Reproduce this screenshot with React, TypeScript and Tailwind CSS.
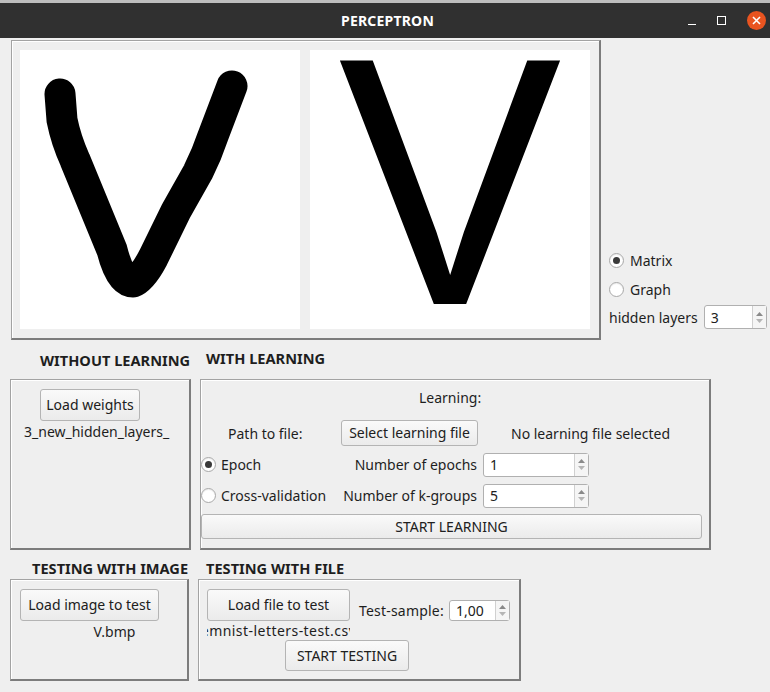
import React from 'react';

const font = { fontFamily: '"Noto Sans", "Open Sans", sans-serif' };

const frame =
  'border border-[#a3a3a3] border-r-2 border-b-2 border-r-[#7c7c7c] border-b-[#7c7c7c] shadow-[inset_1px_1px_0_#ffffff]';

const btn =
  'flex items-center justify-center rounded-[3px] border border-[#b4b4b4] bg-gradient-to-b from-[#fafafa] to-[#ebebeb] text-[14px] text-[#202020] leading-none';

function Radio({ checked }: { checked?: boolean }) {
  return (
    <span className="flex h-[15px] w-[15px] shrink-0 items-center justify-center rounded-full border border-[#a8a8a8] bg-white shadow-[inset_0_1px_1px_rgba(0,0,0,0.08)]">
      {checked && <span className="h-[7px] w-[7px] rounded-full bg-[#3a3a3a]" />}
    </span>
  );
}

function SpinBox({ value, width, height = 24 }: { value: string; width: string; height?: number }) {
  return (
    <div
      className={`flex ${width} items-stretch rounded-[3px] border border-[#b0b0b0] bg-white`}
      style={{ height }}
    >
      <div className="flex flex-1 items-center pl-[6px] text-[14px] text-[#202020]">{value}</div>
      <div className="flex w-[14px] flex-col items-center justify-center gap-[3px] border-l border-[#d0d0d0] bg-[#f5f5f5]">
        <svg width="7" height="4" viewBox="0 0 7 4">
          <path d="M0 4 L3.5 0 L7 4 Z" fill="#8a8a8a" />
        </svg>
        <svg width="7" height="4" viewBox="0 0 7 4">
          <path d="M0 0 L3.5 4 L7 0 Z" fill="#b5b5b5" />
        </svg>
      </div>
    </div>
  );
}

export default function App() {
  return (
    <div className="h-[692px] w-[770px] overflow-hidden bg-[#efefef] text-[#1e1e1e]" style={font}>
      {/* title bar */}
      <div className="h-[3px] bg-[#bdbdbd]" />
      <div className="flex h-[35px] items-center justify-between bg-[#303030] pr-[4px]">
        <span className="ml-[341px] text-[14px] font-bold tracking-[0.2px] text-white">PERCEPTRON</span>
        <div className="flex h-full items-center gap-[21px]">
          <span className="mt-[8px] h-[1.5px] w-[8px] bg-white" />
          <span className="h-[9px] w-[9px] border-[1.5px] border-white" />
          <span className="flex h-[19px] w-[19px] items-center justify-center rounded-full bg-[#e95420]">
            <svg width="9" height="9" viewBox="0 0 9 9">
              <path d="M1 1 L8 8 M8 1 L1 8" stroke="white" strokeWidth="1.6" />
            </svg>
          </span>
        </div>
      </div>

      {/* images + view options */}
      <div className="mt-[2px] flex">
        <div className={`ml-[11px] flex h-[300px] w-[590px] gap-[10px] pl-[8px] pt-[9px] ${frame}`}>
          <div className="h-[279px] w-[280px] bg-white">
            <svg width="280" height="279" viewBox="0 0 280 279">
              <path
                d="M40 44 L42 70 Q46 90 55 110 L92 200 Q100 232 113 232 Q122 229 133 208 L156 161 L178 122 Q187 104 193 86 L212 36"
                fill="none"
                stroke="black"
                strokeWidth="31"
                strokeLinecap="round"
                strokeLinejoin="round"
              />
            </svg>
          </div>
          <div className="h-[279px] w-[280px] bg-white">
            <svg width="280" height="279" viewBox="0 0 280 279">
              <text
                x="0"
                y="254"
                transform="translate(140 0) scale(0.945 1)"
                textAnchor="middle"
                fontSize="354"
                fontFamily='"Liberation Sans", Arial, sans-serif'
                fill="black"
              >
                V
              </text>
            </svg>
          </div>
        </div>
        <div className="ml-[8px] flex flex-col pt-[211px] text-[14px]">
          <div className="flex h-[18px] items-center gap-[6px]">
            <Radio checked />
            <span>Matrix</span>
          </div>
          <div className="mt-[11px] flex h-[18px] items-center gap-[6px]">
            <Radio />
            <span>Graph</span>
          </div>
          <div className="mt-[7px] flex items-center gap-[6px]">
            <span>hidden layers</span>
            <SpinBox value="3" width="w-[63px]" />
          </div>
        </div>
      </div>

      {/* learning section headings */}
      <div className="mt-[9px] flex h-[20px] items-center text-[14.6px] font-bold">
        <span className="ml-[40px] mt-[4px] w-[166px] whitespace-nowrap">WITHOUT LEARNING</span>
        <span>WITH LEARNING</span>
      </div>

      <div className="mt-[10px] flex">
        <div className={`ml-[10px] h-[171px] w-[181px] ${frame} flex flex-col`}>
          <div className={`${btn} ml-[29px] mt-[9px] h-[32px] w-[100px]`}>Load weights</div>
          <div className="pl-[13px] text-[14px]">3_new_hidden_layers_</div>
        </div>

        <div className={`ml-[9px] h-[171px] w-[511px] ${frame} flex flex-col text-[14px]`}>
          <div className="mt-[7px] flex h-[20px] items-center pl-[218px]">Learning:</div>
          <div className="mt-[13px] flex h-[26px] items-center">
            <span className="ml-[27px] w-[113px]">Path to file:</span>
            <div className={`${btn} h-[26px] w-[137px]`}>Select learning file</div>
            <span className="ml-[33px] whitespace-nowrap">No learning file selected</span>
          </div>
          <div className="mt-[6px] flex h-[25px] items-center">
            <Radio checked />
            <span className="ml-[5px] w-[110px]">Epoch</span>
            <span className="w-[152px] pr-[6px] text-right">Number of epochs</span>
            <SpinBox value="1" width="w-[106px]" />
          </div>
          <div className="mt-[6px] flex h-[25px] items-center">
            <Radio />
            <span className="ml-[5px] w-[110px] whitespace-nowrap">Cross-validation</span>
            <span className="w-[152px] whitespace-nowrap pr-[6px] text-right">Number of k-groups</span>
            <SpinBox value="5" width="w-[106px]" />
          </div>
          <div className={`${btn} mt-[6px] h-[25px] w-[501px]`}>START LEARNING</div>
        </div>
      </div>

      {/* testing section headings */}
      <div className="mt-[9px] flex h-[20px] items-center text-[14.6px] font-bold">
        <span className="ml-[32px] w-[174px] whitespace-nowrap">TESTING WITH IMAGE</span>
        <span>TESTING WITH FILE</span>
      </div>

      <div className="flex">
        <div className={`ml-[10px] h-[102px] w-[179px] ${frame} flex flex-col`}>
          <div className={`${btn} ml-[9px] mt-[9px] h-[32px] w-[139px]`}>Load image to test</div>
          <div className="text-center text-[14px]" style={{ width: 207 }}>
            V.bmp
          </div>
        </div>

        <div className={`ml-[9px] h-[102px] w-[323px] ${frame} flex flex-col text-[14px]`}>
          <div className="mt-[9px] flex">
            <div className="flex flex-col">
              <div className={`${btn} ml-[8px] h-[32px] w-[143px]`}>Load file to test</div>
              <div className="ml-[8px] flex w-[143px] justify-center overflow-hidden whitespace-nowrap text-[14px] leading-[20px]">
                <span className="shrink-0 tracking-[0.45px]">emnist-letters-test.csv</span>
              </div>
            </div>
            <div className="ml-[9px] mt-[10px] flex h-[22px] items-center gap-[5px]">
              <span className="tracking-[0.2px]">Test-sample:</span>
              <SpinBox value="1,00" width="w-[61px]" height={21} />
            </div>
          </div>
          <div className={`${btn} ml-[86px] mt-[-1px] h-[31px] w-[124px]`}>START TESTING</div>
        </div>
      </div>
    </div>
  );
}
